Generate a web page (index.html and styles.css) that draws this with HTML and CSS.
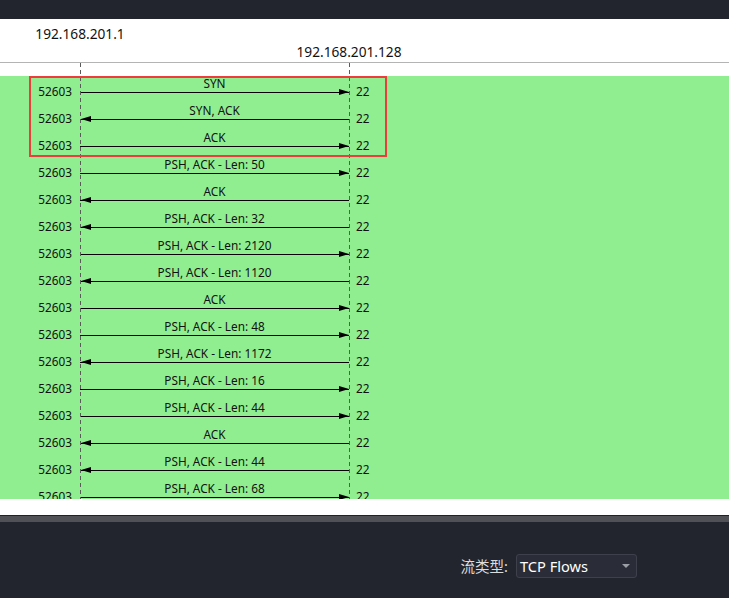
FILE: index.html
```html
<!DOCTYPE html>
<html lang="zh">
<head>
<meta charset="utf-8">
<title>Flow Graph</title>
<link rel="stylesheet" href="styles.css">
</head>
<body>
<div class="topbar"></div>
<div class="hosts">
  <div class="host host-a">192.168.201.1</div>
  <div class="host host-b">192.168.201.128</div>
</div>
<div class="chart">
  <div class="flows">
    <div class="row"><span class="port src">52603</span><div class="msg"><span class="label">SYN</span><div class="arrow to-right"></div></div><span class="port dst">22</span></div>
    <div class="row"><span class="port src">52603</span><div class="msg"><span class="label">SYN, ACK</span><div class="arrow to-left"></div></div><span class="port dst">22</span></div>
    <div class="row"><span class="port src">52603</span><div class="msg"><span class="label">ACK</span><div class="arrow to-right"></div></div><span class="port dst">22</span></div>
    <div class="row"><span class="port src">52603</span><div class="msg"><span class="label">PSH, ACK - Len: 50</span><div class="arrow to-right"></div></div><span class="port dst">22</span></div>
    <div class="row"><span class="port src">52603</span><div class="msg"><span class="label">ACK</span><div class="arrow to-left"></div></div><span class="port dst">22</span></div>
    <div class="row"><span class="port src">52603</span><div class="msg"><span class="label">PSH, ACK - Len: 32</span><div class="arrow to-left"></div></div><span class="port dst">22</span></div>
    <div class="row"><span class="port src">52603</span><div class="msg"><span class="label">PSH, ACK - Len: 2120</span><div class="arrow to-right"></div></div><span class="port dst">22</span></div>
    <div class="row"><span class="port src">52603</span><div class="msg"><span class="label">PSH, ACK - Len: 1120</span><div class="arrow to-left"></div></div><span class="port dst">22</span></div>
    <div class="row"><span class="port src">52603</span><div class="msg"><span class="label">ACK</span><div class="arrow to-right"></div></div><span class="port dst">22</span></div>
    <div class="row"><span class="port src">52603</span><div class="msg"><span class="label">PSH, ACK - Len: 48</span><div class="arrow to-right"></div></div><span class="port dst">22</span></div>
    <div class="row"><span class="port src">52603</span><div class="msg"><span class="label">PSH, ACK - Len: 1172</span><div class="arrow to-left"></div></div><span class="port dst">22</span></div>
    <div class="row"><span class="port src">52603</span><div class="msg"><span class="label">PSH, ACK - Len: 16</span><div class="arrow to-right"></div></div><span class="port dst">22</span></div>
    <div class="row"><span class="port src">52603</span><div class="msg"><span class="label">PSH, ACK - Len: 44</span><div class="arrow to-right"></div></div><span class="port dst">22</span></div>
    <div class="row"><span class="port src">52603</span><div class="msg"><span class="label">ACK</span><div class="arrow to-left"></div></div><span class="port dst">22</span></div>
    <div class="row"><span class="port src">52603</span><div class="msg"><span class="label">PSH, ACK - Len: 44</span><div class="arrow to-left"></div></div><span class="port dst">22</span></div>
    <div class="row"><span class="port src">52603</span><div class="msg"><span class="label">PSH, ACK - Len: 68</span><div class="arrow to-right"></div></div><span class="port dst">22</span></div>
  </div>
  <div class="highlight"></div>
</div>
<div class="spacer"></div>
<div class="bottom">
  <div class="grip"></div>
  <div class="controls">
    <span class="ctl-label">流类型:</span>
    <div class="select"><span class="select-text">TCP Flows</span><span class="caret"></span></div>
  </div>
</div>
</body>
</html>
```
FILE: styles.css
```css
html, body {
  margin: 0;
  padding: 0;
}
body {
  width: 729px;
  height: 598px;
  overflow: hidden;
  background: #ffffff;
  font-family: "Noto Sans", "Noto Sans CJK SC", sans-serif;
  color: #000;
}
.topbar {
  height: 19px;
  background: #23252e;
}
.hosts {
  height: 37px;
  padding-top: 6px;
  border-bottom: 1px solid #b4b4b4;
}
.host {
  width: 160px;
  text-align: center;
  font-size: 13.7px;
  line-height: 17px;
  white-space: nowrap;
  color: #111;
}
.host-b {
  margin-top: 1px;
  margin-left: 269px;
}
.chart {
  position: relative;
  padding-top: 13px;
}
.chart::before,
.chart::after {
  content: "";
  position: absolute;
  top: 0;
  bottom: 0;
  width: 1px;
  background: repeating-linear-gradient(to bottom, #5a5a5a 0 4px, transparent 4px 7px);
  z-index: 2;
}
.chart::before { left: 80px; }
.chart::after { left: 349px; }
.flows {
  height: 423px;
  overflow: hidden;
  background: #90ee90;
}
.row {
  display: grid;
  grid-template-columns: 80px 269px 1fr;
  height: 27px;
}
.port {
  font-size: 11.8px;
  line-height: 14px;
  padding-top: 8px;
  color: #111;
}
.port.src {
  text-align: right;
  padding-right: 8px;
}
.port.dst {
  padding-left: 7px;
}
.msg {
  display: flex;
  flex-direction: column;
}
.label {
  font-size: 11.8px;
  line-height: 14px;
  text-align: center;
  white-space: nowrap;
  color: #111;
}
.arrow {
  margin-top: 2px;
  height: 1px;
  background: #000;
  position: relative;
}
.arrow::after {
  content: "";
  position: absolute;
  top: -3px;
  border-top: 3.5px solid transparent;
  border-bottom: 3.5px solid transparent;
}
.arrow.to-right::after {
  right: 0;
  border-left: 10px solid #000;
}
.arrow.to-left::after {
  left: 1px;
  border-right: 10px solid #000;
}
.highlight {
  position: absolute;
  top: 13px;
  left: 29px;
  width: 358px;
  height: 81px;
  box-sizing: border-box;
  border: 2px solid #ee3b3b;
  z-index: 3;
}
.spacer {
  height: 16px;
}
.bottom {
  border-top: 1px solid #202126;
  background: #23252e;
  height: 82px;
}
.grip {
  height: 6px;
  background: #4f5157;
}
.controls {
  display: flex;
  justify-content: flex-end;
  align-items: center;
  gap: 8px;
  padding-top: 32px;
  padding-right: 92px;
}
.ctl-label {
  color: #dcdcdc;
  font-size: 14.5px;
  line-height: 24px;
}
.select {
  width: 121px;
  height: 24px;
  box-sizing: border-box;
  border: 1px solid #3e414b;
  border-radius: 3px;
  background: #2a2d37;
  display: flex;
  align-items: center;
  justify-content: space-between;
  padding: 0 6px 0 3px;
}
.select-text {
  color: #ffffff;
  font-size: 14.6px;
  line-height: 20px;
}
.caret {
  width: 0;
  height: 0;
  border-left: 4px solid transparent;
  border-right: 4px solid transparent;
  border-top: 4px solid #9c9ea5;
}
```
